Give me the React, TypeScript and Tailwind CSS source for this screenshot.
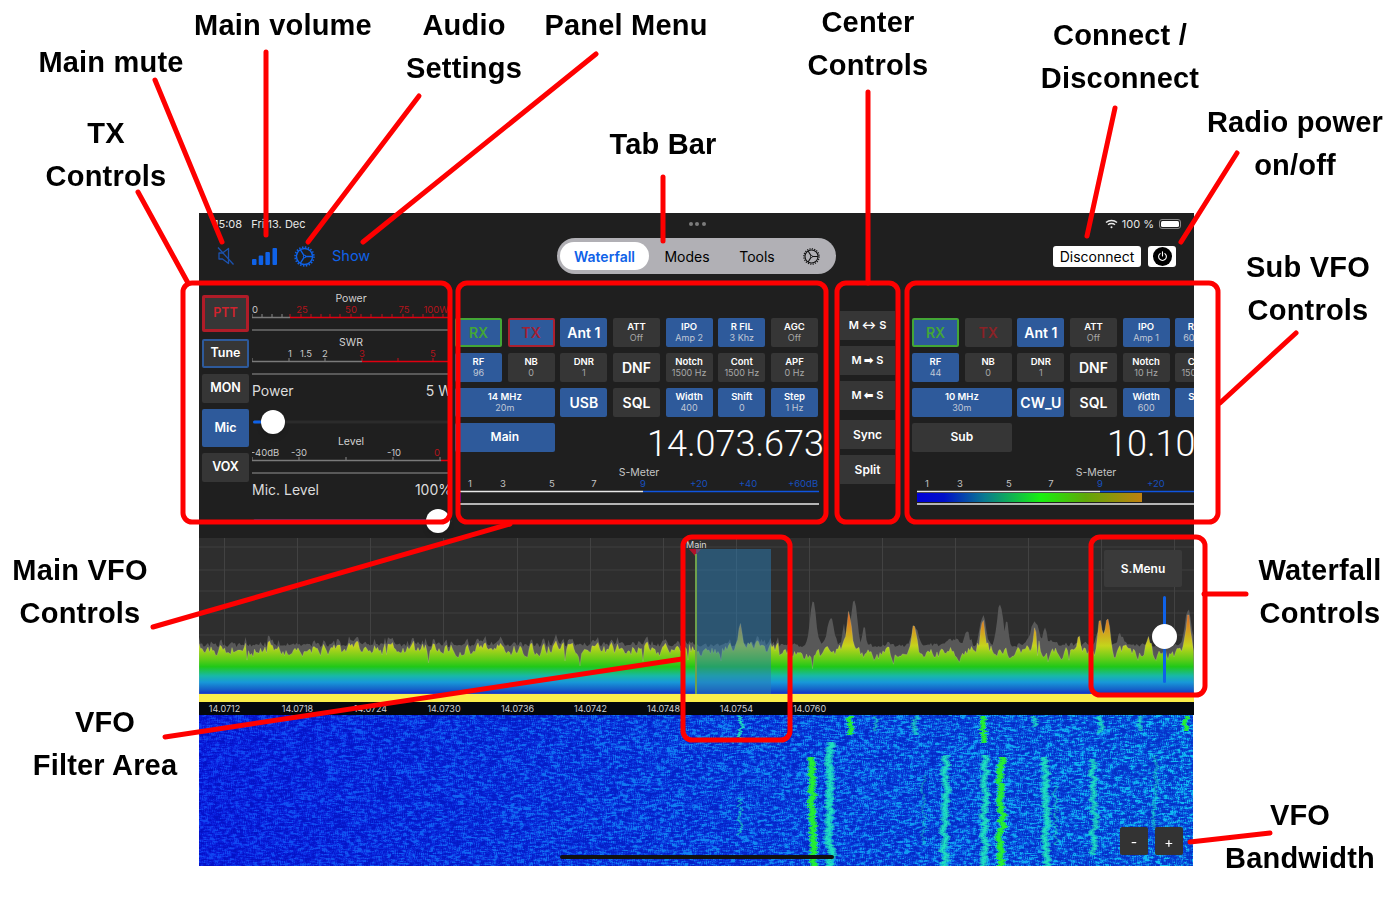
import { useEffect, useRef } from "react"

const seeded = (seed: number) => () => {
  seed |= 0
  seed = (seed + 0x6d2b79f5) | 0
  let t = Math.imul(seed ^ (seed >>> 15), 1 | seed)
  t = (t + Math.imul(t ^ (t >>> 7), 61 | t)) ^ t
  return ((t ^ (t >>> 14)) >>> 0) / 4294967296
}

const hump = (x: number, c: number, w: number, h: number) =>
  h * Math.exp(-((x - c) * (x - c)) / (2 * w * w))

const SIGNAL_PEAKS: [number, number, number][] = [
  [650, 2.2, 48], [716, 2.5, 28], [784, 2.5, 38], [836, 3, 26], [901, 2, 30],
  [908, 2.5, 32], [949, 2.5, 22], [989, 2.5, 38], [650, 5, 12], [784, 6, 12],
  [836, 6, 10], [901, 2, 14], [926, 2, 10], [880, 1.5, 12],
]
const HOLD_HUMPS: [number, number, number][] = [
  [614, 3, 44], [632, 3, 26], [645, 1.5, 18], [655, 3, 46], [665, 1.5, 20],
  [716, 3, 18], [768, 2.5, 12], [801, 3, 42], [808, 1.5, 26], [784, 3, 30],
  [836, 4, 24], [846, 2, 18], [900, 3, 12], [922, 3, 10], [989, 3, 36],
  [755, 6, 6], [850, 5, 5],
]

const { tracePath, holdPath } = (() => {
  const rand = seeded(7)
  const trace: string[] = []
  const hold: string[] = []
  let prev = 0
  for (let x = 0; x <= 995; x += 1.5) {
    const abs = x + 199
    prev = prev * 0.5 + (rand() - 0.5) * 11
    let y = 111 + (x < 580 ? 0 : 5) + prev
    if (rand() < 0.03) y += 7 + rand() * 9
    let top = 0
    for (const [c, w, h] of SIGNAL_PEAKS) top = Math.max(top, hump(x, c, w, h))
    top = Math.max(top, hump(abs, 740, 2.2, 26), hump(abs, 742, 7, 7))
    trace.push(`${x},${(y - top).toFixed(1)}`)
    let hh = 0
    for (const [c, w, h] of HOLD_HUMPS) hh = Math.max(hh, hump(x, c, w, h))
    hold.push(`${x},${(Math.min(y, 112) - 3 - rand() * 4 - hh).toFixed(1)}`)
  }
  return {
    tracePath: `M0,156 L${trace.join(" L")} L995,156 Z`,
    holdPath: `M0,156 L${hold.join(" L")} L995,156 Z`,
  }
})()

// frequency traces on the waterfall: x, y from, y to, half width, strength
const TRACES: [number, number, number, number, number][] = [
  [613, 42, 151, 4.5, 1],
  [631, 27, 151, 4.5, 0.9],
  [651, 1, 20, 3.5, 1],
  [676, 1, 16, 2, 0.5],
  [716, 1, 20, 3, 0.6],
  [746, 40, 151, 4, 0.85],
  [725, 60, 130, 1.5, 0.35],
  [784, 1, 28, 3.5, 1],
  [785, 40, 151, 4, 0.85],
  [801, 42, 151, 4.5, 1],
  [846, 42, 151, 4, 0.85],
  [856, 70, 130, 1.5, 0.45],
  [894, 44, 140, 3.5, 0.75],
  [835, 1, 12, 3, 0.7],
  [901, 1, 18, 3, 0.7],
  [956, 40, 120, 2, 0.4],
  [941, 1, 16, 2.5, 0.6],
  [988, 1, 16, 3, 1],
  [541, 1, 23, 2, 0.8],
  [541, 83, 120, 1.5, 0.5],
]

const drawWaterfall = (ctx: CanvasRenderingContext2D) => {
  const w = 994
  const h = 151
  const rand = seeded(21)
  const img = ctx.createImageData(995, h)
  const heat = new Float32Array(995 * h)
  const green = new Uint8Array(995 * h)
  const noise = new Float32Array(995 * h)
  for (let i = 0; i < noise.length; i++) noise[i] = rand()
  for (const [x0, y0, y1, width, power] of TRACES) {
    let drift = 0
    let wob = 0
    for (let y = y0; y < y1; y++) {
      wob = wob * 0.65 + (rand() - 0.5) * 3.6
      drift += (rand() - 0.5) * 0.25
      const cx = x0 + wob + drift
      for (let x = Math.floor(cx - width); x <= cx + width; x++) {
        if (x < 0 || x >= 995) continue
        const d = Math.abs(x - cx) / width
        if (d >= 1) continue
        const idx = y * 995 + x
        heat[idx] = Math.max(heat[idx], power * (1.3 - d * 0.85) * (0.75 + rand() * 0.45))
        if (power >= 1 && d < 0.7) green[idx] = 1
      }
    }
  }
  const at = (px: number, py: number) =>
    noise[Math.min(h - 1, Math.max(0, py)) * 995 + Math.min(994, Math.max(0, px))]
  for (let y = 0; y < h; y++) {
    for (let x = 0; x < 995; x++) {
      const i = (y * 995 + x) * 4
      if (x >= w) {
        img.data[i] = img.data[i + 1] = img.data[i + 2] = 255
        img.data[i + 3] = 255
        continue
      }
      const side = x / 995
      // soft blotches, wider along the row
      const n =
        (at(x, y) * 2 + at(x + 1, y) + at(x - 1, y) + at(x + 2, y) + at(x - 2, y) + at(x, y + 1) + at(x, y - 1)) / 8
      const s = Math.max(0, Math.min(1, (n - 0.32) * 2.8))
      let r = 4 + s * 12
      let g = 18 + s * s * (50 + side * 90) + side * 34
      let b = 198 + s * 44
      const idx = y * 995 + x
      const v = heat[idx]
      if (v > 0) {
        const k = Math.min(v, 1)
        const isGreen = green[idx] === 1
        r = r * (1 - k) + (isGreen ? 35 : 30) * k
        g = g * (1 - k) + (isGreen ? 240 : 225) * k
        b = b * (1 - k) + (isGreen ? 50 : 190) * k
      }
      img.data[i] = r
      img.data[i + 1] = g
      img.data[i + 2] = b
      img.data[i + 3] = 255
    }
  }
  ctx.putImageData(img, 0, 0)
}

const WaterfallCanvas = () => {
  const ref = useRef<HTMLCanvasElement>(null)
  useEffect(() => {
    const ctx = ref.current?.getContext("2d")
    if (ctx) drawWaterfall(ctx)
  }, [])
  return <canvas ref={ref} width={995} height={151} className="block h-[151px] w-[995px]" />
}

const GearIcon = ({ color, size }: { color: string; size: number }) => (
  <svg width={size} height={size} viewBox="0 0 24 24" fill="none" stroke={color}>
    <circle cx="12" cy="12" r="9.2" strokeWidth="1.6" />
    <circle cx="12" cy="12" r="10.8" strokeWidth="1.8" strokeDasharray="1.7 1.7" />
    <circle cx="12" cy="12" r="1.4" strokeWidth="1.2" />
    <path d="M13.3 12H21M11.3 13.2L7.2 19.8M11.3 10.8L7.2 4.2" strokeWidth="1.5" />
  </svg>
)

const MuteIcon = () => (
  <svg width="18" height="20" viewBox="0 0 18 20" fill="none" stroke="#1c52ad" strokeWidth="1.3">
    <path d="M2 7H5.5L11.5 2.5V17.5L5.5 13H2Z" strokeLinejoin="round" />
    <path d="M1 1.5L16.5 18.5" />
  </svg>
)

const SignalIcon = () => (
  <svg width="25" height="17" viewBox="0 0 25 17" fill="#0f62e8">
    <rect x="0" y="11" width="4.5" height="6" rx="1" />
    <rect x="6.7" y="7.5" width="4.5" height="9.5" rx="1" />
    <rect x="13.4" y="4" width="4.5" height="13" rx="1" />
    <rect x="20.5" y="0" width="4.5" height="17" rx="1" />
  </svg>
)

const WifiIcon = () => (
  <svg width="13" height="10" viewBox="0 0 13 10" fill="none" stroke="#e8e8e8" strokeWidth="1.4">
    <path d="M1 3.6C4 .7 9 .7 12 3.6M3 5.7C4.9 4 8.1 4 10 5.7" />
    <circle cx="6.5" cy="8.2" r="1" fill="#e8e8e8" stroke="none" />
  </svg>
)

const BLUE = "bg-[#2e5a9b]"
const GRAY = "bg-[#363636]"

const Btn = ({
  title,
  sub,
  blue,
  big,
  className = "",
}: {
  title: string
  sub?: string
  blue?: boolean
  big?: boolean
  className?: string
}) => (
  <div
    className={`flex h-[29px] flex-col items-center justify-center rounded-[2px] text-center font-semibold text-white ${
      blue ? BLUE : GRAY
    } ${big ? "text-[14px]" : "text-[9.5px] leading-[10.5px]"} ${className}`}
  >
    <span className="whitespace-nowrap">{title}</span>
    {sub && (
      <span className={`whitespace-nowrap text-[9px] font-normal leading-[10.5px] ${blue ? "text-[#c0c8d6]" : "text-[#a8a8a8]"}`}>
        {sub}
      </span>
    )}
  </div>
)

type MeterLabel = [number, string, boolean?]

const Meter = ({
  title,
  labels,
  ticks,
  redFrom,
}: {
  title: string
  labels: MeterLabel[]
  ticks: number[]
  redFrom: number
}) => (
  <svg width="200" height="44" className="block shrink-0" fontFamily="Inter, sans-serif">
    <text x="99" y="10" textAnchor="middle" fontSize="10.5" fill="#d0d0d0">
      {title}
    </text>
    {labels.map(([x, t, red]) => (
      <text key={t} x={x} y="21" textAnchor="middle" fontSize="9.5" fill={red ? "#b3131b" : "#c8c8c8"}>
        {t}
      </text>
    ))}
    {ticks.map((x) => (
      <line key={x} x1={x} x2={x} y1="22" y2="25" stroke={x >= redFrom ? "#c8101a" : "#8a8a8a"} />
    ))}
    <line x1="0" x2={redFrom} y1="25.5" y2="25.5" stroke="#7a7a7a" strokeWidth="1.5" />
    <line x1={redFrom} x2="200" y1="25.5" y2="25.5" stroke="#e00010" strokeWidth="1.5" />
    <line x1="0" x2="200" y1="38" y2="38" stroke="#6e6e6e" strokeWidth="1.5" />
  </svg>
)

const Slider = ({ fill, thumb, className }: { fill: string; thumb: string; className: string }) => (
  <div className={`relative w-full shrink-0 ${className}`}>
    <div className="absolute left-[1px] right-0 top-1/2 h-[3px] -translate-y-1/2 rounded-full bg-[#2b2b2b]" />
    <div className={`absolute left-[1px] top-1/2 h-[3px] -translate-y-1/2 rounded-full bg-[#0f62e8] ${fill}`} />
    <div className={`absolute top-1/2 h-[24px] w-[24px] -translate-y-1/2 rounded-full bg-white shadow-md ${thumb}`} />
  </div>
)

const SMeter = ({ barEnd }: { barEnd?: number }) => (
  <svg width="369" height="42" className="mt-[14px] block shrink-0" fontFamily="Inter, sans-serif">
    <defs>
      <linearGradient id={barEnd ? "sbar" : "mbar"} x1="5" x2="230" y1="0" y2="0" gradientUnits="userSpaceOnUse">
        <stop offset="0" stopColor="#0000d8" />
        <stop offset="0.12" stopColor="#0010c8" />
        <stop offset="0.3" stopColor="#0a7a90" />
        <stop offset="0.55" stopColor="#18f010" />
        <stop offset="0.75" stopColor="#60a808" />
        <stop offset="1" stopColor="#c08010" />
      </linearGradient>
    </defs>
    <text x="184" y="10" textAnchor="middle" fontSize="10.5" fill="#c4c4c4">
      S-Meter
    </text>
    {[[15, "1"], [48, "3"], [97, "5"], [139, "7"]].map(([x, t]) => (
      <text key={t} x={x} y="21" textAnchor="middle" fontSize="9.5" fill="#c4c4c4">
        {t}
      </text>
    ))}
    {[[188, "9"], [244, "+20"], [293, "+40"], [348, "+60dB"]].map(([x, t]) => (
      <text key={t} x={x} y="21" textAnchor="middle" fontSize="9.5" fill="#174fbe">
        {t}
      </text>
    ))}
    <line x1="5" x2="188" y1="25.5" y2="25.5" stroke="#e8e8e8" strokeWidth="1.5" />
    <line x1="188" x2="364" y1="25.5" y2="25.5" stroke="#0f55e0" strokeWidth="1.5" />
    {barEnd ? (
      <rect x="5" y="27" width={barEnd} height="9" fill="url(#sbar)" />
    ) : (
      <rect x="5" y="27" width="1" height="9" fill="#1010d0" />
    )}
    <line x1="5" x2="364" y1="38" y2="38" stroke="#e8e8e8" strokeWidth="1.5" />
  </svg>
)

const VfoPanel = ({
  main,
  rows,
  freq,
  barEnd,
  className,
}: {
  main: boolean
  rows: { band: [string, string]; mode: string; ant: string; r: [string, string]; cols: [string, string][] }
  freq: string
  barEnd?: number
  className: string
}) => (
  <div className={`flex flex-col pt-[38px] ${className}`}>
    <div className="grid w-[369px] grid-cols-[repeat(7,47px)] gap-x-[5.67px] gap-y-[6px]">
      <Btn title="RX" big blue className="border-2 border-[#43a636] font-medium !text-[#43a636]" />
      <Btn
        title="TX"
        big
        blue={main}
        className={main ? "border-2 border-[#ab2030] font-medium !text-[#a32033]" : "font-medium !text-[#8c2226]"}
      />
      <Btn title={rows.ant} big blue />
      <Btn title="ATT" sub="Off" />
      <Btn title="IPO" sub={rows.r[0]} blue />
      <Btn title="R FIL" sub={rows.r[1]} blue />
      <Btn title="AGC" sub="Off" />

      <Btn title="RF" sub={rows.cols[0][1]} blue />
      <Btn title="NB" sub="0" />
      <Btn title="DNR" sub="1" />
      <Btn title="DNF" big />
      <Btn title="Notch" sub={rows.cols[1][1]} />
      <Btn title="Cont" sub="1500 Hz" />
      <Btn title="APF" sub="0 Hz" />

      <Btn title={rows.band[0]} sub={rows.band[1]} blue className="col-span-2" />
      <Btn title={rows.mode} big blue />
      <Btn title="SQL" big />
      <Btn title="Width" sub={rows.cols[2][1]} blue />
      <Btn title="Shift" sub="0" blue />
      <Btn title="Step" sub="1 Hz" blue />

      <Btn title={main ? "Main" : "Sub"} blue={main} className="col-span-2 !text-[12px]" />
      <div
        className={`col-span-5 flex h-[29px] items-center justify-end whitespace-nowrap pt-[12px] font-['Roboto',sans-serif] text-[36px] font-light leading-none text-white ${
          main ? "-mr-[6px]" : "-mr-[9px]"
        }`}
      >
        {freq}
      </div>
    </div>
    <SMeter barEnd={barEnd} />
  </div>
)

const SideBtn = ({ title, className = "" }: { title: string; className?: string }) => (
  <div className={`flex h-[29px] items-center justify-center bg-[#363636] font-semibold text-white ${className}`}>
    {title}
  </div>
)

const FREQ_LABELS = [
  ["14.0712", "w-[73px]"],
  ["14.0718", "w-[73px]"],
  ["14.0724", "w-[73px]"],
  ["14.0730", "w-[74px]"],
  ["14.0736", "w-[73px]"],
  ["14.0742", "w-[73px]"],
  ["14.0748", "w-[73px]"],
  ["14.0754", "w-[73px]"],
  ["14.0760", "w-[73px]"],
]

const Spectrum = () => (
  <div className="relative h-[156px] w-[995px] overflow-hidden bg-[#2e2e2e]">
    <svg width="995" height="156" className="absolute inset-0">
      <defs>
        <linearGradient id="spec" x1="0" x2="0" y1="65" y2="156" gradientUnits="userSpaceOnUse">
          <stop offset="0" stopColor="#d83a30" />
          <stop offset="0.25" stopColor="#d98a20" />
          <stop offset="0.47" stopColor="#c4d41c" />
          <stop offset="0.62" stopColor="#60cc18" />
          <stop offset="0.7" stopColor="#20c818" />
          <stop offset="0.8" stopColor="#18b8a8" />
          <stop offset="0.87" stopColor="#1898d8" />
          <stop offset="0.95" stopColor="#1560c8" />
          <stop offset="1" stopColor="#1030c8" />
        </linearGradient>
      </defs>
      {[9, 32, 53, 75, 97, 119].map((y) => (
        <line key={y} x1="0" x2="995" y1={y} y2={y} stroke="#3e3e3e" />
      ))}
      {[25.5, 98.5, 171.5, 244.5, 318.5, 391.5, 464.5, 537.5, 610.5, 683.5, 756.5, 829.5, 902.5, 975.5].map((x) => (
        <line key={x} x1={x} x2={x} y1="0" y2="156" stroke="#424242" />
      ))}
      <path d={holdPath} fill="#585858" />
      <path d={tracePath} fill="url(#spec)" stroke="#cfd8a0" strokeOpacity="0.4" strokeWidth="0.6" />
      <polygon points="490,11 502,11 496,18" fill="#b3122a" />
    </svg>
    <div className="absolute bottom-0 left-[497px] top-[11px] w-[75px] bg-[#2a7cb4]/50" />
    <div className="absolute bottom-0 left-[496px] top-[16px] w-[2px] bg-[#6fa04c]" />
    <span className="absolute left-[487px] top-[1px] text-[9px] leading-[12px] text-[#d8d8d8]">Main</span>
    <div className="absolute left-[905px] top-[12px] flex h-[37px] w-[78px] items-center justify-center rounded-[2px] bg-[#3a3a3a] text-[12px] font-semibold text-white">
      S.Menu
    </div>
    <div className="absolute left-[964px] top-[58px] h-[87px] w-[3px] rounded-full bg-[#0f62e8]" />
    <div className="absolute left-[953px] top-[86px] h-[25px] w-[25px] rounded-full bg-white shadow-md" />
  </div>
)

const LABELS: [string, string][] = [
  ["Main mute", "left-[111px] top-[41px]"],
  ["Main volume", "left-[283px] top-[4px]"],
  ["Audio\nSettings", "left-[464px] top-[4px]"],
  ["Panel Menu", "left-[626px] top-[4px]"],
  ["Center\nControls", "left-[868px] top-[1px]"],
  ["Connect /\nDisconnect", "left-[1120px] top-[14px]"],
  ["Radio power\non/off", "left-[1295px] top-[101px]"],
  ["TX\nControls", "left-[106px] top-[112px]"],
  ["Tab Bar", "left-[663px] top-[123px]"],
  ["Sub VFO\nControls", "left-[1308px] top-[246px]"],
  ["Main VFO\nControls", "left-[80px] top-[549px]"],
  ["Waterfall\nControls", "left-[1320px] top-[549px]"],
  ["VFO\nFilter Area", "left-[105px] top-[701px]"],
  ["VFO\nBandwidth", "left-[1300px] top-[794px]"],
]

const LINES = [
  [155, 80, 222, 242],
  [266, 52, 266, 235],
  [419, 96, 308, 242],
  [596, 54, 363, 242],
  [663, 177, 663, 241],
  [868, 92, 868, 283],
  [1115, 108, 1087, 236],
  [1237, 153, 1181, 242],
  [138, 192, 188, 283],
  [1296, 333, 1220, 403],
  [1204, 594, 1246, 594],
  [153, 627, 510, 524],
  [165, 737, 682, 659],
  [1190, 842, 1270, 833],
]

const BOXES = [
  [183, 283, 267, 239],
  [458, 283, 368, 239],
  [837, 283, 61, 239],
  [907, 283, 311, 239],
  [683, 537, 107, 203],
  [1091, 537, 114, 158],
]

const Annotations = () => (
  <>
    <svg width="1400" height="900" className="pointer-events-none absolute inset-0" fill="none" stroke="#fe0000" strokeWidth="5">
      {LINES.map(([x1, y1, x2, y2]) => (
        <line key={`${x1}-${y1}`} x1={x1} y1={y1} x2={x2} y2={y2} strokeLinecap="round" />
      ))}
      {BOXES.map(([x, y, w, h]) => (
        <rect key={x} x={x} y={y} width={w} height={h} rx="9" />
      ))}
    </svg>
    {LABELS.map(([text, pos]) => (
      <div
        key={text}
        className={`absolute w-max -translate-x-1/2 whitespace-pre-line text-center text-[29px] font-bold leading-[43px] tracking-[0.2px] text-black ${pos}`}
      >
        {text}
      </div>
    ))}
  </>
)

export default function App() {
  return (
    <div className="relative h-[900px] w-[1400px] overflow-hidden bg-white pl-[199px] pt-[213px] font-['Liberation_Sans',sans-serif]">
      <div className="flex h-[653px] w-[995px] flex-col overflow-hidden bg-[#1f1f1f] font-['Inter',sans-serif]">
        {/* status bar */}
        <div className="grid h-[22px] shrink-0 grid-cols-3 items-center pl-[15px] pr-[13px] text-[11px] text-[#e6e6e6]">
          <span className="whitespace-pre">15:08   Fri 13. Dec</span>
          <div className="flex justify-center gap-[2.5px]">
            <i className="h-[4px] w-[4px] rounded-full bg-[#7c7c7c]" />
            <i className="h-[4px] w-[4px] rounded-full bg-[#7c7c7c]" />
            <i className="h-[4px] w-[4px] rounded-full bg-[#7c7c7c]" />
          </div>
          <div className="flex items-center justify-end gap-[4px]">
            <WifiIcon />
            <span>100 %</span>
            <div className="ml-[1px] flex h-[10px] w-[22px] items-center rounded-[3px] border border-[#8a8a8a] p-[1px]">
              <div className="h-full w-full rounded-[1.5px] bg-white" />
            </div>
          </div>
        </div>

        {/* toolbar */}
        <div className="flex h-[45px] shrink-0 items-center pb-[3px]">
          <div className="flex w-[358px] items-center pl-[18px]">
            <MuteIcon />
            <div className="ml-[17px]">
              <SignalIcon />
            </div>
            <div className="ml-[17px]">
              <GearIcon color="#0f62e8" size={21} />
            </div>
            <span className="ml-[17px] text-[14.5px] text-[#0f62e8]">Show</span>
          </div>
          <div className="flex h-[36px] w-[279px] items-center rounded-full bg-[#b1b0b5] pl-[3px] text-[14px] text-black">
            <div className="flex h-[28px] w-[89px] items-center justify-center rounded-full bg-white font-semibold text-[#0f62e8]">
              Waterfall
            </div>
            <span className="w-[76px] text-center">Modes</span>
            <span className="w-[64px] text-center">Tools</span>
            <div className="flex w-[44px] justify-center">
              <GearIcon color="#111" size={17} />
            </div>
          </div>
          <div className="flex flex-1 items-center justify-end gap-[7px] pr-[18px]">
            <div className="flex h-[21px] w-[88px] items-center justify-center rounded-[3px] bg-white text-[14px] text-black">
              Disconnect
            </div>
            <div className="flex h-[21px] w-[28px] items-center justify-center rounded-[3px] bg-white">
              <div className="flex h-[19px] w-[19px] items-center justify-center rounded-full bg-black">
                <svg width="11" height="11" viewBox="0 0 12 12" fill="none" stroke="#fff" strokeWidth="1.2" strokeLinecap="round">
                  <path d="M6 1V5.5M3.4 2.8A4.2 4.2 0 1 0 8.6 2.8" />
                </svg>
              </div>
            </div>
          </div>
        </div>

        {/* controls */}
        <div className="flex h-[258px] shrink-0">
          <div className="ml-[3px] flex w-[47px] shrink-0 flex-col gap-[6px] pt-[15px] text-[12.5px] font-semibold">
            <div className="flex h-[37px] items-center justify-center rounded-[2px] border-[3px] border-[#b01c28] bg-[#363636] text-[#d0242e]">
              PTT
            </div>
            <div className="mt-[1px] flex h-[29px] items-center justify-center rounded-[2px] border-2 border-[#2e5a9b] bg-[#363636] text-white">
              Tune
            </div>
            <div className="flex h-[29px] items-center justify-center rounded-[2px] bg-[#363636] text-white">MON</div>
            <div className="flex h-[38px] items-center justify-center rounded-[2px] bg-[#2e5a9b] text-white">Mic</div>
            <div className="flex h-[29px] items-center justify-center rounded-[2px] bg-[#363636] text-white">VOX</div>
          </div>

          <div className="ml-[3px] flex w-[200px] shrink-0 flex-col pt-[12px]">
            <Meter
              title="Power"
              redFrom={38}
              labels={[[3, "0"], [50, "25", true], [99, "50", true], [152, "75", true], [184, "100W", true]]}
              ticks={[0, 10, 20, 30, 38, 49, 59, 69, 78, 88, 99, 109, 119, 130, 140, 151, 161, 171, 181, 191]}
            />
            <Meter
              title="SWR"
              redFrom={110}
              labels={[[38, "1"], [54, "1.5"], [73, "2"], [110, "3", true], [181, "5", true]]}
              ticks={[0, 37, 73, 110, 146, 181]}
            />
            <div className="flex h-[20px] shrink-0 items-center justify-between whitespace-nowrap text-[14px] text-[#dcdcdc]">
              <span>Power</span>
              <span>5 W</span>
            </div>
            <Slider className="mt-[9px] h-[26px]" fill="w-[9px]" thumb="left-[9px]" />
            <Meter
              title="Level"
              redFrom={189}
              labels={[[13, "-40dB"], [47, "-30"], [142, "-10"], [185, "0", true]]}
              ticks={[0, 47, 94, 141, 188, 198]}
            />
            <div className="flex h-[20px] shrink-0 items-center justify-between whitespace-nowrap text-[14px] text-[#dcdcdc]">
              <span>Mic. Level</span>
              <span>100%</span>
            </div>
            <Slider className="h-[44px]" fill="w-[175px]" thumb="left-[174px]" />
          </div>

          <VfoPanel
            main
            className="ml-[3px] w-[369px] shrink-0"
            freq="14.073.673"
            rows={{
              band: ["14 MHz", "20m"],
              mode: "USB",
              ant: "Ant 1",
              r: ["Amp 2", "3 Khz"],
              cols: [["RF", "96"], ["Notch", "1500 Hz"], ["Width", "400"]],
            }}
          />

          <div className="ml-[16px] flex w-[55px] shrink-0 flex-col gap-[6px] pt-[31px] text-[12px]">
            <SideBtn title="M ↔ S" className="text-[11px]" />
            <SideBtn title="M ➡ S" className="text-[11px]" />
            <SideBtn title="M ⬅ S" className="text-[11px]" />
            <SideBtn title="Sync" className="mt-[4px]" />
            <SideBtn title="Split" />
          </div>

          <VfoPanel
            main={false}
            className="ml-[17px] w-[369px] shrink-0"
            freq="10.100.000"
            barEnd={225}
            rows={{
              band: ["10 MHz", "30m"],
              mode: "CW_U",
              ant: "Ant 1",
              r: ["Amp 1", "600 Hz"],
              cols: [["RF", "44"], ["Notch", "10 Hz"], ["Width", "600"]],
            }}
          />
        </div>

        {/* spectrum + axis + waterfall */}
        <Spectrum />
        <div className="h-[8px] shrink-0 bg-[#fbee4a]" />
        <div className="flex h-[13px] shrink-0 items-center bg-[#04080d] text-[9px] text-[#d0d0d0]">
          {FREQ_LABELS.map(([t, w]) => (
            <span key={t} className={`text-center first:ml-[-11px] ${w}`}>
              {t}
            </span>
          ))}
        </div>
        <div className="relative h-[151px] shrink-0">
          <WaterfallCanvas />
          <div className="absolute right-[11px] top-[112px] flex gap-[7px] text-[14px] text-white">
            <div className="flex h-[28px] w-[28px] items-center justify-center rounded-[2px] bg-[#333]">-</div>
            <div className="flex h-[28px] w-[28px] items-center justify-center rounded-[2px] bg-[#333]">+</div>
          </div>
          <div className="absolute left-[361px] top-[140px] h-[4px] w-[274px] rounded-full bg-[#111]" />
        </div>
      </div>
      <Annotations />
    </div>
  )
}
